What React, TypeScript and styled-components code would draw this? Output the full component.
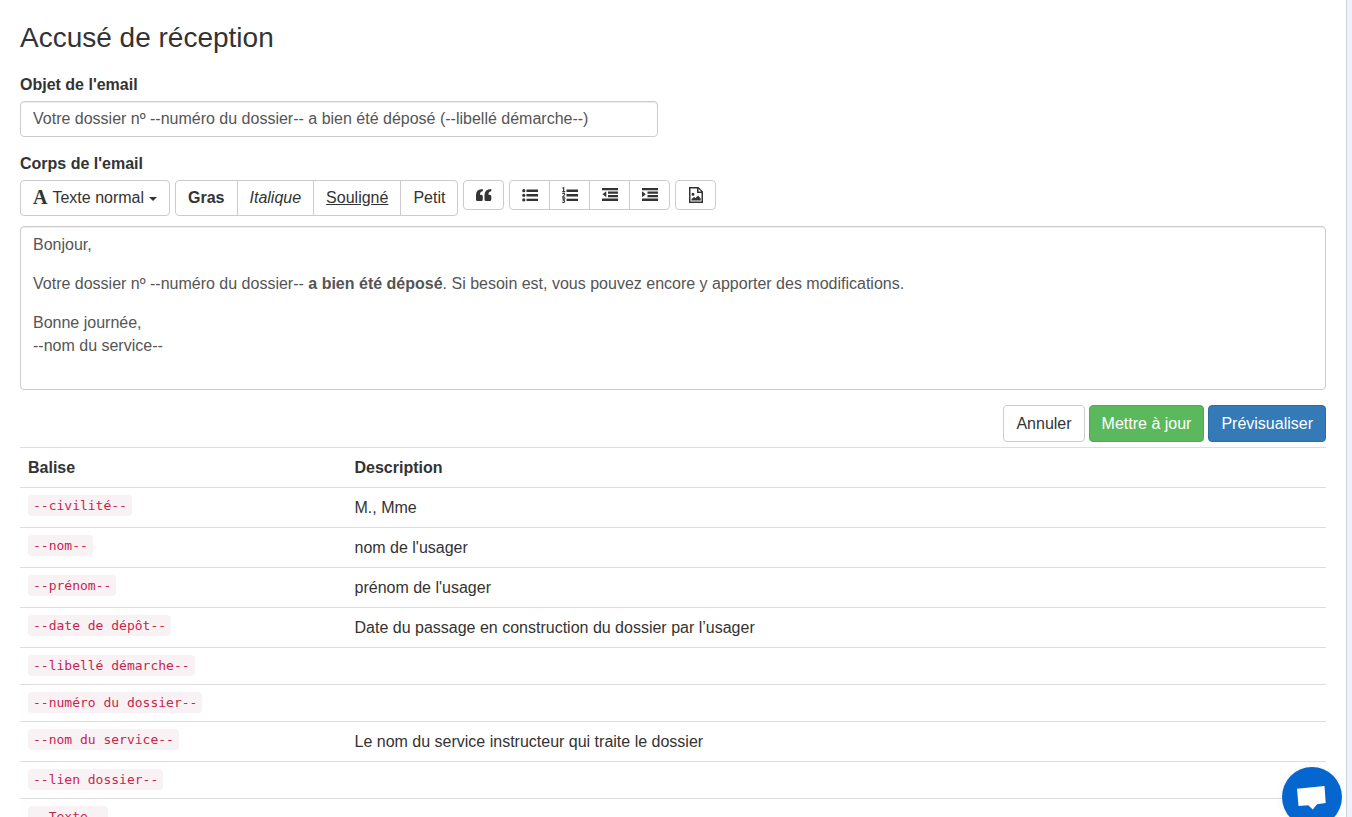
import React from 'react';
import styled, { createGlobalStyle, css } from 'styled-components';

const GlobalStyle = createGlobalStyle`
  * { box-sizing: border-box; }
  html { height: 100%; }
  body {
    margin: 0;
    height: 100%;
    overflow: hidden;
    background: #eff3f9;
    color: #333;
    font: 16px/23px "Liberation Sans", Arial, sans-serif;
  }
  #root { height: 100%; }
`;

const Page = styled.div`
  height: 100%;
  padding-right: 5px;
`;

const Panel = styled.main`
  height: 100%;
  overflow: hidden;
  padding: 20px 20px 0;
  background: #fff;
  border-right: 1px solid #ccd3dc;
`;

const Title = styled.h1`
  margin: 0 0 18px;
  font-size: 28px;
  line-height: 35px;
  font-weight: 400;
`;

const Label = styled.label`
  display: block;
  margin-bottom: 5px;
  font-weight: 700;
`;

const field = css`
  display: block;
  padding: 6px 12px;
  border: 1px solid #ccc;
  border-radius: 4px;
  background: #fff;
  color: #555;
  box-shadow: inset 0 1px 1px rgba(0, 0, 0, 0.075);
`;

const SubjectInput = styled.input`
  ${field}
  width: 50%;
  max-width: 638px;
  height: 36px;
  margin-bottom: 15px;
  font: inherit;
`;

const Toolbar = styled.div`
  display: flex;
  align-items: flex-start;
  gap: 5px;
  margin-bottom: 10px;
`;

const Group = styled.div`
  display: flex;
`;

const Button = styled.button<{ $tone?: 'success' | 'primary' }>`
  height: 36px;
  padding: 0 12px 1px;
  border: 1px solid #ccc;
  border-radius: 4px;
  background: #fff;
  color: #333;
  font: inherit;
  white-space: nowrap;
  cursor: pointer;

  ${(p) => p.$tone === 'success' && css`
    background: #5cb85c;
    border-color: #4cae4c;
    color: #fff;
  `}
  ${(p) => p.$tone === 'primary' && css`
    background: #337ab7;
    border-color: #2e6da4;
    color: #fff;
  `}

  ${Group} > & { border-radius: 0; }
  ${Group} > & + & { margin-left: -1px; }
  ${Group} > &:first-child { border-radius: 4px 0 0 4px; }
  ${Group} > &:last-child { border-radius: 0 4px 4px 0; }
  ${Group} > &:only-child { border-radius: 4px; }
`;

const StyleButton = styled(Button)`
  display: flex;
  align-items: center;
  gap: 5px;
`;

const IconButton = styled(Button)`
  display: flex;
  align-items: center;
  width: 41px;
  height: 30px;
  padding-bottom: 0;
`;

const Icon = styled.svg`
  display: block;
  flex: none;
  fill: currentColor;
`;

const Letter = styled.span`
  font: 700 20px/23px "Liberation Serif", "Times New Roman", serif;
`;

const Caret = styled.span`
  margin-top: 3px;
  border-top: 4px solid currentColor;
  border-left: 4px solid transparent;
  border-right: 4px solid transparent;
`;

const Editor = styled.div`
  ${field}
  min-height: 164px;
  margin-bottom: 15px;

  p { margin: 0 0 16px; }
`;

const Actions = styled.div`
  display: flex;
  justify-content: flex-end;
  gap: 4px;
  margin-bottom: 5px;

  button {
    height: 37px;
    padding-bottom: 0;
  }
`;

const TagTable = styled.table`
  width: 100%;
  border-spacing: 0;
`;

const HeadCell = styled.th`
  padding: 8px;
  border-top: 1px solid #ddd;
  text-align: left;

  &:first-child { width: 25%; }
`;

const Cell = styled.td`
  padding: 8px;
  border-top: 1px solid #ddd;
  vertical-align: top;
`;

const TagCell = styled(Cell)`
  font: 13px/20px "DejaVu Sans Mono", monospace;
`;

const Tag = styled.code`
  padding: 3px 5px;
  border-radius: 4px;
  background: #f9f2f4;
  color: #c7254e;
  font: inherit;
`;

const EmptyCell = styled(Cell)`
  padding: 0;
`;

const ChatButton = styled.button`
  position: fixed;
  right: 10px;
  bottom: -10px;
  width: 60px;
  height: 60px;
  padding: 0;
  border: 0;
  border-radius: 50%;
  background: #0566cf;
  color: #fff;
  box-shadow: 0 1px 8px rgba(0, 0, 0, 0.06);
  cursor: pointer;
`;

const tags = [
  { name: 'civilité', description: 'M., Mme' },
  { name: 'nom', description: "nom de l'usager" },
  { name: 'prénom', description: "prénom de l'usager" },
  { name: 'date de dépôt', description: 'Date du passage en construction du dossier par l’usager' },
  { name: 'libellé démarche' },
  { name: 'numéro du dossier' },
  { name: 'nom du service', description: 'Le nom du service instructeur qui traite le dossier' },
  { name: 'lien dossier' },
  { name: 'Texte' },
];

const lines = 'M4.500 2.500H16v2.400H4.500zM4.500 7.100H16v2.400H4.500zM4.500 11.700H16v2.400H4.500z';

const icons = {
  quote: <path d="M6.800 2v2.300C5 4.500 4 5.700 4 7v.8h1.200Q6.800 7.800 6.800 9.300v3.200Q6.800 14 5.300 14H1.500Q0 14 0 12.500V8Q0 2 6.800 2ZM15.300 2v2.300c-1.800.2-2.800 1.400-2.800 2.700v.8h1.200q1.600 0 1.600 1.500v3.200q0 1.500-1.500 1.500H10q-1.500 0-1.500-1.500V8q0-6 6.800-6Z" />,
  bullets: (
    <>
      <circle cx="1.800" cy="3.700" r="1.600" />
      <circle cx="1.800" cy="8.300" r="1.600" />
      <circle cx="1.800" cy="12.900" r="1.600" />
      <path d={lines} />
    </>
  ),
  numbers: (
    <>
      <path d={lines} />
      <path
        d="M.5 1.300 1.700.6v4M.3 4.600h2.900M.4 6.800C1.200 6 2.800 6.200 2.600 7.500 2.500 8.500.5 9.500.5 10.200h2.700M.4 11.900h2.200L1.500 13.200c1.800 0 1.500 2.200 0 2.200H.3"
        fill="none"
        stroke="currentColor"
        strokeWidth="1.100"
      />
    </>
  ),
  outdent: <path d="M0 .900h16v2.300H0zM6 4.500h10v2.200H6zM6 8h10v2.200H6zM0 11.500h16v2.400H0zM4.300 4.200v6L.5 7.200z" />,
  indent: <path d="M0 .900h16v2.300H0zM5.500 4.500H16v2.200H5.500zM5.500 8H16v2.200H5.500zM0 11.500h16v2.400H0zM0 4.200v6l3.800-3z" />,
  image: <path fillRule="evenodd" d="M1 0h9.500L15 4.500V16H1zM2.500 1.500v13h11V6H9V1.500zM10.500 1.800v2.700h2.700zM3.500 7.200a1.500 1.500 0 1 1 3 0 1.500 1.500 0 1 1-3 0zM3.500 13.500V12L6 10l1.500 1 2.500-2.500 2.700 3v2z" />,
};

function ToolIcon({ name }: { name: keyof typeof icons }) {
  return <Icon width="16" height="16" viewBox="0 0 16 16" aria-hidden="true">{icons[name]}</Icon>;
}

export default function App() {
  return (
    <Page>
      <GlobalStyle />
      <Panel>
        <Title>Accusé de réception</Title>

        <Label htmlFor="subject">Objet de l'email</Label>
        <SubjectInput
          id="subject"
          type="text"
          defaultValue="Votre dossier nº --numéro du dossier-- a bien été déposé (--libellé démarche--)"
        />

        <Label as="div" id="body-label">Corps de l'email</Label>
        <Toolbar role="toolbar" aria-label="Mise en forme">
          <StyleButton type="button">
            <Letter aria-hidden="true">A</Letter>
            Texte normal
            <Caret />
          </StyleButton>
          <Group>
            <Button type="button"><b>Gras</b></Button>
            <Button type="button"><i>Italique</i></Button>
            <Button type="button"><u>Souligné</u></Button>
            <Button type="button">Petit</Button>
          </Group>
          <Group>
            <IconButton type="button" aria-label="Citation"><ToolIcon name="quote" /></IconButton>
          </Group>
          <Group>
            <IconButton type="button" aria-label="Liste à puces"><ToolIcon name="bullets" /></IconButton>
            <IconButton type="button" aria-label="Liste numérotée"><ToolIcon name="numbers" /></IconButton>
            <IconButton type="button" aria-label="Diminuer le retrait"><ToolIcon name="outdent" /></IconButton>
            <IconButton type="button" aria-label="Augmenter le retrait"><ToolIcon name="indent" /></IconButton>
          </Group>
          <Group>
            <IconButton type="button" aria-label="Image"><ToolIcon name="image" /></IconButton>
          </Group>
        </Toolbar>

        <Editor role="textbox" aria-multiline="true" aria-labelledby="body-label" contentEditable suppressContentEditableWarning>
          <p>Bonjour,</p>
          <p>
            Votre dossier nº --numéro du dossier-- <b>a bien été déposé</b>. Si besoin est, vous pouvez encore y apporter des modifications.
          </p>
          <p>Bonne journée,<br />--nom du service--</p>
        </Editor>

        <Actions>
          <Button type="button">Annuler</Button>
          <Button type="submit" $tone="success">Mettre à jour</Button>
          <Button type="button" $tone="primary">Prévisualiser</Button>
        </Actions>

        <TagTable>
          <thead>
            <tr>
              <HeadCell scope="col">Balise</HeadCell>
              <HeadCell scope="col">Description</HeadCell>
            </tr>
          </thead>
          <tbody>
            {tags.map(({ name, description }) => (
              <tr key={name}>
                <TagCell><Tag>--{name}--</Tag></TagCell>
                {description ? <Cell>{description}</Cell> : <EmptyCell />}
              </tr>
            ))}
          </tbody>
        </TagTable>
      </Panel>

      <ChatButton type="button" aria-label="Ouvrir la messagerie">
        <Icon width="60" height="60" viewBox="0 0 60 60" aria-hidden="true">
          <path d="M15 21.700 42.500 19 43.700 36 35 37.200 30.800 42.500 26.300 38.300 16.500 39z" />
        </Icon>
      </ChatButton>
    </Page>
  );
}
